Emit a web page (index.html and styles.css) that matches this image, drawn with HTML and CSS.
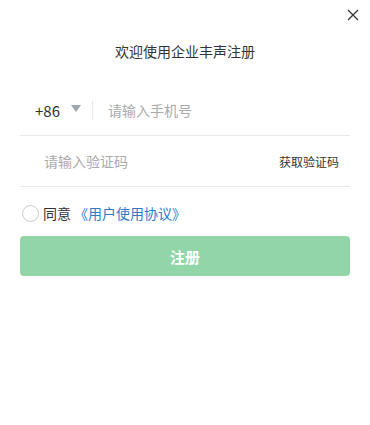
FILE: index.html
```html
<!DOCTYPE html>
<html lang="zh-CN">
<head>
<meta charset="utf-8">
<title>注册</title>
<link rel="stylesheet" href="styles.css">
</head>
<body>
<div class="dialog">
  <button class="close" aria-label="关闭">
    <svg width="12" height="12" viewBox="0 0 12 12"><path d="M1 1L11 11M11 1L1 11" stroke="#333" stroke-width="1.3" fill="none"/></svg>
  </button>
  <h1 class="title">欢迎使用企业丰声注册</h1>
  <div class="form">
    <div class="row phone-row">
      <span class="code">+86</span>
      <span class="caret"></span>
      <span class="divider"></span>
      <span class="placeholder">请输入手机号</span>
    </div>
    <div class="row code-row">
      <span class="placeholder">请输入验证码</span>
      <span class="get-code">获取验证码</span>
    </div>
    <div class="agree">
      <span class="radio"></span>
      <span class="agree-text">同意</span>
      <a class="link">《用户使用协议》</a>
    </div>
    <button class="submit">注册</button>
  </div>
</div>
</body>
</html>
```
FILE: styles.css
```css
* { box-sizing: border-box; }
body {
  margin: 0;
  background: #fff;
  font-family: "Noto Sans CJK SC", "Noto Sans", sans-serif;
  color: #333;
}
.dialog {
  position: relative;
  width: 370px;
  height: 425px;
  padding-top: 41px;
  background: #fff;
}
.close {
  position: absolute;
  top: 9px;
  right: 11px;
  width: 12px;
  height: 12px;
  padding: 0;
  border: 0;
  background: none;
  line-height: 0;
}
.title {
  margin: 0;
  font-size: 14px;
  font-weight: normal;
  line-height: 20px;
  text-align: center;
  color: #333;
}
.form {
  padding: 0 20px;
  margin-top: 24px;
}
.row {
  display: flex;
  align-items: center;
  height: 51px;
  border-bottom: 1px solid #e8e8e8;
}
.phone-row { padding-left: 15px; }
.code {
  font-size: 15px;
  color: #333;
}
.caret {
  width: 0;
  height: 0;
  margin-left: 11px;
  border-left: 5px solid transparent;
  border-right: 5px solid transparent;
  border-top: 7px solid #9ea7b0;
  margin-top: -3px;
}
.divider {
  width: 1px;
  height: 19px;
  background: #e6e6e6;
  margin-left: 11px;
}
.placeholder {
  font-size: 14px;
  color: #aaa;
}
.phone-row .placeholder { margin-left: 15px; }
.code-row {
  padding-left: 24px;
  padding-right: 11px;
  justify-content: space-between;
}
.get-code {
  font-size: 12px;
  color: #333;
}
.agree {
  display: flex;
  align-items: center;
  margin-top: 17px;
  height: 18px;
  font-size: 14px;
}
.radio {
  width: 17px;
  height: 17px;
  border: 1px solid #c8c8c8;
  border-radius: 50%;
  margin-left: 2px;
}
.agree-text { margin-left: 4px; color: #333; }
.link { color: #2a7cc7; margin-left: 3px; }
.submit {
  display: block;
  width: 100%;
  height: 40px;
  margin-top: 14px;
  border: 0;
  border-radius: 4px;
  background: #91d5a8;
  color: #fff;
  font-family: inherit;
  font-size: 15px;
  font-weight: bold;
}
```
